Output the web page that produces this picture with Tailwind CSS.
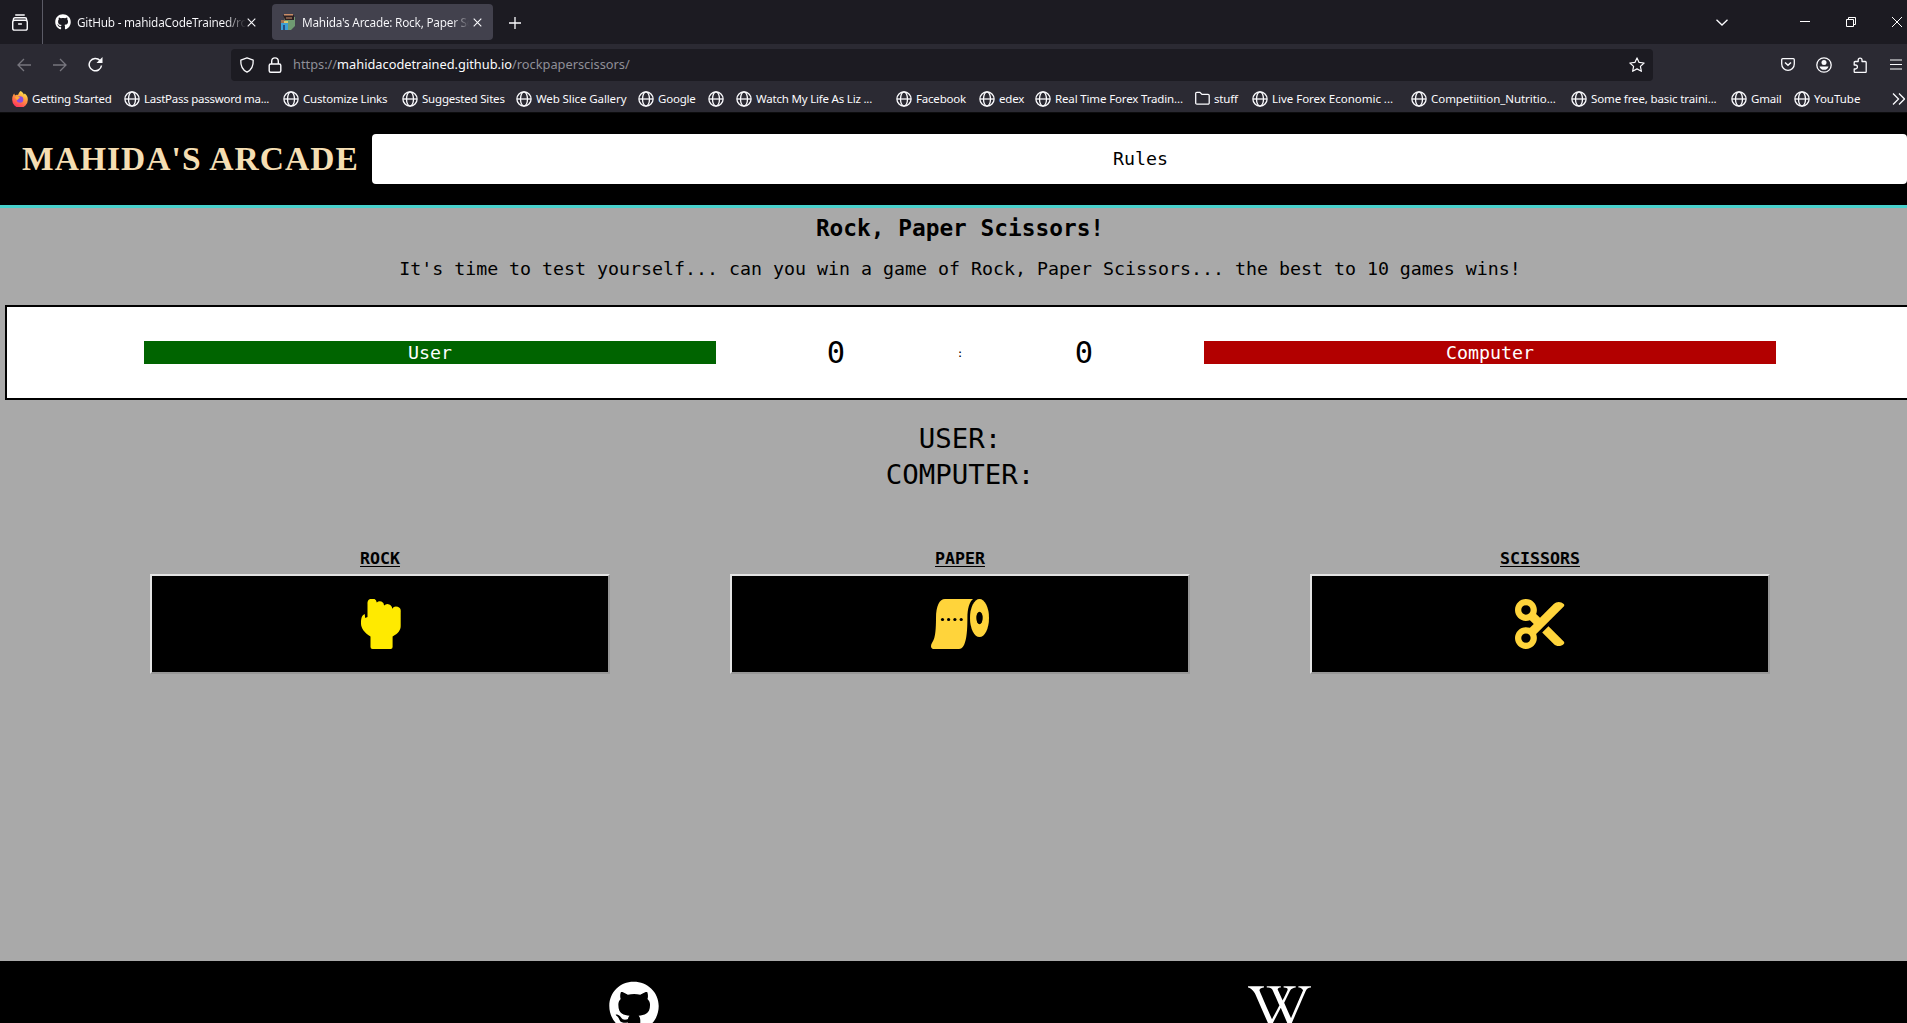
<!DOCTYPE html>
<html lang="en">
<head>
<meta charset="utf-8">
<title>Mahida's Arcade: Rock, Paper Scissors</title>
<script src="https://cdn.jsdelivr.net/npm/@tailwindcss/browser@4"></script>
</head>
<body class="w-[1907px] h-[1023px] overflow-hidden bg-[#a9a9a9] font-['Noto_Sans',sans-serif] text-black">
<svg class="hidden">
  <symbol id="globe" viewBox="0 0 16 16"><g fill="none" stroke="#fbfbfe" stroke-width="1.3"><circle cx="8" cy="8" r="7.1"/><ellipse cx="8" cy="8" rx="3.5" ry="7.1"/><path d="M1 8h14"/></g></symbol>
  <symbol id="octocat" viewBox="0 0 496 512"><path d="M244.8 8C106.1 8 0 113.3 0 252c0 110.9 69.8 205.8 169.5 239.2 12.8 2.3 17.3-5.6 17.3-12.1 0-6.2-.3-40.4-.3-61.4 0 0-70 15-84.7-29.8 0 0-11.4-29.1-27.8-36.6 0 0-22.9-15.7 1.6-15.4 0 0 24.9 2 38.6 25.8 21.9 38.6 58.6 27.5 72.9 20.9 2.3-16 8.8-27.1 16-33.7-55.9-6.2-112.3-14.3-112.3-110.5 0-27.5 7.6-41.3 23.6-58.9-2.6-6.5-11.1-33.3 2.6-67.9 20.9-6.5 69 27 69 27 20-5.6 41.5-8.5 62.8-8.5s42.8 2.9 62.8 8.5c0 0 48.1-33.6 69-27 13.7 34.7 5.2 61.4 2.6 67.9 16 17.7 25.8 31.5 25.8 58.9 0 96.5-58.9 104.2-114.8 110.5 9.2 7.9 17 22.9 17 46.4 0 33.7-.3 75.4-.3 83.6 0 6.5 4.6 14.4 17.3 12.1C428.2 457.8 496 362.9 496 252 496 113.3 383.5 8 244.8 8z"/></symbol>
</svg>

<!-- Tab strip -->
<div class="h-11 bg-[#1c1b22] flex items-center text-[11.8px] text-[#fbfbfe] tracking-[-0.23px]">
  <div class="w-[43px] h-11 border-r border-[#5b5b66] flex items-center pl-[11px] shrink-0">
    <svg class="w-[18px] h-[17px]" viewBox="0 0 18 18" fill="none" stroke="#fbfbfe" stroke-width="1.5" stroke-linecap="round"><path d="M4.500 1h9"/><path d="M2 6.500V5.700a1.700 1.700 0 0 1 1.700-1.700h10.600A1.700 1.700 0 0 1 16 5.700v.8"/><rect x="1.300" y="6.700" width="15.400" height="10.400" rx="2"/><path d="M7.500 10.500h3"/></svg>
  </div>
  <div class="w-[229px] flex items-center pl-3 shrink-0">
    <svg class="w-4 h-4 fill-white shrink-0"><use href="#octocat"/></svg>
    <div class="mt-[2px] ml-[6px] w-[169px] overflow-hidden whitespace-nowrap bg-linear-to-r from-[#fbfbfe] from-88% to-transparent bg-clip-text text-transparent">GitHub - mahidaCodeTrained/rock</div>
    <svg class="ml-[1px] w-[9px] h-[9px] shrink-0" viewBox="0 0 9 9" stroke="#fbfbfe" stroke-width="1.1"><path d="M.7.7l7.6 7.6M8.3.7L.7 8.3"/></svg>
  </div>
  <div class="w-[221px] h-9 rounded bg-[#42414d] flex items-center pl-[8px] shrink-0">
    <svg class="w-4 h-4 shrink-0" viewBox="0 0 16 16"><path fill="#6f9a72" d="M4 3h11v9l-4 4H6z"/><path fill="#2b2022" d="M3 1h11v5H5z"/><path fill="#c98d68" d="M4 0h9v1.5H4zM6 3.5h6v1H6z"/><path fill="#a06f50" d="M1 6h4v4H1z"/><path fill="#3b9ed4" d="M1 9h7v7H1z"/><path fill="#d9c66c" d="M4 7h4v2H4z"/><path fill="#274f86" d="M3 11h2v5H3z"/></svg>
    <div class="mt-[2px] ml-[6px] w-[167px] overflow-hidden whitespace-nowrap bg-linear-to-r from-[#fbfbfe] from-90% to-transparent bg-clip-text text-transparent">Mahida's Arcade: Rock, Paper Sci</div>
    <svg class="ml-[4px] w-[9px] h-[9px] shrink-0" viewBox="0 0 9 9" stroke="#fbfbfe" stroke-width="1.1"><path d="M.7.7l7.6 7.6M8.3.7L.7 8.3"/></svg>
  </div>
  <svg class="ml-[16px] mt-[2px] w-3 h-3" viewBox="0 0 12 12" stroke="#fbfbfe" stroke-width="1.3"><path d="M6 0v12M0 6h12"/></svg>
  <div class="ml-auto flex items-center">
    <svg class="w-3 h-[7px]" viewBox="0 0 12 7" fill="none" stroke="#fbfbfe" stroke-width="1.3"><path d="M.5.7L6 6l5.500-5.300"/></svg>
    <svg class="ml-[72px] w-[10px] h-[10px]" viewBox="0 0 10 10" stroke="#fff"><path d="M0 4.500h10"/></svg>
    <svg class="ml-[36px] w-[10px] h-[10px]" viewBox="0 0 10 10" fill="none" stroke="#fff"><path d="M.5 2.500h7v7h-7zM2.500 2.500v-2h7v7h-2"/></svg>
    <svg class="ml-[36px] mr-[5px] w-[10px] h-[10px]" viewBox="0 0 10 10" stroke="#fff"><path d="M0 0l10 10M10 0L0 10"/></svg>
  </div>
</div>

<!-- Navigation bar -->
<div class="h-10 pt-px bg-[#2b2a33] flex items-center text-[12.8px]">
  <svg class="ml-[17px] w-[14px] h-[14px]" viewBox="0 0 14 14" fill="none" stroke="#77767e" stroke-width="1.3"><path d="M14 7H1M7 1L1 7l6 6"/></svg>
  <svg class="ml-[22px] w-[14px] h-[14px]" viewBox="0 0 14 14" fill="none" stroke="#77767e" stroke-width="1.3"><path d="M0 7h13M7 1l6 6-6 6"/></svg>
  <svg class="ml-[21px] w-[15px] h-[15px]" viewBox="0 0 15 15" fill="none" stroke="#fbfbfe" stroke-width="1.5"><path d="M13.500 8.500A6.200 6.200 0 1 1 12 3.500"/><path fill="#fbfbfe" stroke="none" d="M14.500 0v6H8.500z"/></svg>
  <div class="ml-[128px] w-[1422px] h-8 rounded bg-[#1c1b22] flex items-center shrink-0">
    <svg class="ml-[8px] w-4 h-4" viewBox="0 0 16 16" fill="none" stroke="#fbfbfe" stroke-width="1.3"><path d="M8 .8l6.200 2.400c.3 5.500-1 9.300-6.200 12-5.200-2.700-6.500-6.500-6.200-12z" stroke-linejoin="round"/></svg>
    <svg class="ml-[12px] w-4 h-4" viewBox="0 0 16 16" fill="none" stroke="#fbfbfe" stroke-width="1.4"><rect x="2.200" y="7" width="11.600" height="8.200" rx="1.500"/><path d="M4.700 7V4.200a3.300 3.300 0 0 1 6.600 0V7"/></svg>
    <div class="mt-px ml-[10px] whitespace-nowrap text-[#8f8f97]">https://<span class="text-[#fbfbfe]">mahidacodetrained.github.io</span>/rockpaperscissors/</div>
    <svg class="ml-auto mr-[8px] w-4 h-4" viewBox="0 0 16 16" fill="none" stroke="#fbfbfe" stroke-width="1.2" stroke-linejoin="round"><path d="M8 .9l2.100 4.500 5 .6-3.700 3.400 1 4.900L8 11.900l-4.400 2.400 1-4.900L.9 6l5-.6z"/></svg>
  </div>
  <svg class="ml-[128px] w-[14px] h-[13px] shrink-0" viewBox="0 0 14 13" fill="none" stroke="#fbfbfe" stroke-width="1.3"><path d="M1.700.7h10.600a1 1 0 0 1 1 1V6A6.300 6.300 0 0 1 .7 6V1.700a1 1 0 0 1 1-1z"/><path d="M4 4.500l3 2.800 3-2.800" stroke-width="1.500"/></svg>
  <svg class="ml-[21px] w-4 h-4 shrink-0" viewBox="0 0 16 16"><circle cx="8" cy="8" r="7.200" fill="none" stroke="#fbfbfe" stroke-width="1.300"/><circle cx="8" cy="5.600" r="2.500" fill="#fbfbfe"/><path fill="#fbfbfe" d="M3.500 9.500h9a4.700 4.700 0 0 1-9 0z"/></svg>
  <svg class="ml-[20px] w-4 h-4 shrink-0" viewBox="0 0 16 16" fill="none" stroke="#fbfbfe" stroke-width="1.300" stroke-linejoin="round"><path d="M2.200 8V5.500a1 1 0 0 1 1-1h3V3a1.900 1.900 0 0 1 3.800 0v1.500h3.200a1 1 0 0 1 1 1v9a1 1 0 0 1-1 1h-10a1 1 0 0 1-1-1V12h1.200a2 2 0 0 0 0-4z"/></svg>
  <svg class="ml-[22px] w-[12px] h-[11px] shrink-0" viewBox="0 0 12 11" stroke="#fbfbfe" stroke-width="1.200"><path d="M0 1h12M0 5.500h12M0 10h12"/></svg>
</div>

<!-- Bookmarks -->
<div class="h-[29px] bg-[#2b2a33] border-b border-[#0c0c0d] pl-3 pt-px flex items-center text-[11.5px] text-[#fbfbfe] whitespace-nowrap tracking-[-0.2px] *:flex *:items-center *:shrink-0 *:gap-1">
  <div class="w-[112px]"><svg class="w-4 h-4 shrink-0" viewBox="0 0 16 16"><defs><linearGradient id="fx" x1=".8" y1="0" x2=".3" y2="1"><stop offset="0" stop-color="#fff44f"/><stop offset=".45" stop-color="#ff9640"/><stop offset="1" stop-color="#ff2a5f"/></linearGradient></defs><path fill="url(#fx)" d="M8.500 0c2 1 3 2.300 3.300 3.500l1-1C14.800 4 16 6 15.800 9A7.800 7.800 0 0 1 .2 9C0 6.500 1 4 2.200 2.600L3 4.500C4 3.500 5 3.500 6 4 6.500 2.500 7.500 1 8.500 0z"/><circle cx="8" cy="8.500" r="3.300" fill="#8a4be0"/><path fill="#ffac38" d="M3 6c2-1 4-.5 5 .7L6 8.200c0 1-1.500 1-2 0z"/></svg><span>Getting Started</span></div>
  <div class="w-[159px]"><svg class="w-4 h-4 shrink-0"><use href="#globe"/></svg><span class="tracking-[-0.26px]">LastPass password ma...</span></div>
  <div class="w-[119px]"><svg class="w-4 h-4 shrink-0"><use href="#globe"/></svg><span>Customize Links</span></div>
  <div class="w-[114px]"><svg class="w-4 h-4 shrink-0"><use href="#globe"/></svg><span>Suggested Sites</span></div>
  <div class="w-[122px]"><svg class="w-4 h-4 shrink-0"><use href="#globe"/></svg><span class="tracking-[-0.1px]">Web Slice Gallery</span></div>
  <div class="w-[70px]"><svg class="w-4 h-4 shrink-0"><use href="#globe"/></svg><span>Google</span></div>
  <div class="w-[28px]"><svg class="w-4 h-4 shrink-0"><use href="#globe"/></svg></div>
  <div class="w-[160px]"><svg class="w-4 h-4 shrink-0"><use href="#globe"/></svg><span class="tracking-0">Watch My Life As Liz ...</span></div>
  <div class="w-[83px]"><svg class="w-4 h-4 shrink-0"><use href="#globe"/></svg><span>Facebook</span></div>
  <div class="w-[56px]"><svg class="w-4 h-4 shrink-0"><use href="#globe"/></svg><span>edex</span></div>
  <div class="w-[160px]"><svg class="w-4 h-4 shrink-0"><use href="#globe"/></svg><span class="tracking-[-0.15px]">Real Time Forex Tradin...</span></div>
  <div class="w-[57px]"><svg class="w-[15px] h-[15px] shrink-0" viewBox="0 0 15 15" fill="none" stroke="#fbfbfe" stroke-width="1.300"><path d="M.7 12V2.500a1.200 1.200 0 0 1 1.200-1.200h3L7 3.400h6a1.200 1.200 0 0 1 1.200 1.200V12A1.200 1.200 0 0 1 13 13.200H2A1.200 1.200 0 0 1 .7 12z"/></svg><span>stuff</span></div>
  <div class="w-[159px]"><svg class="w-4 h-4 shrink-0"><use href="#globe"/></svg><span class="tracking-[-0.02px]">Live Forex Economic ...</span></div>
  <div class="w-[160px]"><svg class="w-4 h-4 shrink-0"><use href="#globe"/></svg><span class="tracking-[-0.05px]">Competiition_Nutritio...</span></div>
  <div class="w-[160px]"><svg class="w-4 h-4 shrink-0"><use href="#globe"/></svg><span class="tracking-[-0.13px]">Some free, basic traini...</span></div>
  <div class="w-[63px]"><svg class="w-4 h-4 shrink-0"><use href="#globe"/></svg><span>Gmail</span></div>
  <div class="w-[98px]"><svg class="w-4 h-4 shrink-0"><use href="#globe"/></svg><span class="tracking-[-0.02px]">YouTube</span></div>
  <div><svg class="w-[13px] h-3" viewBox="0 0 13 12" fill="none" stroke="#fbfbfe" stroke-width="1.300"><path d="M1 .5L6.500 6 1 11.500M7 .5L12.500 6 7 11.500"/></svg></div>
</div>

<!-- Page: laid out 13px wider than the visible window -->
<div class="w-[1920px] h-[910px] flex flex-col font-['DejaVu_Sans_Mono',monospace]">
  <header class="h-[95px] bg-black border-b-[3px] border-[#48d1cc] flex items-center shrink-0">
    <h1 class="ml-[22px] w-[350px] shrink-0 whitespace-nowrap font-['Liberation_Serif',serif] font-bold text-[33.500px] tracking-[1.050px] leading-none text-[#f5deb3]">MAHIDA'S ARCADE</h1>
    <button class="w-[1535px] h-[50px] rounded bg-white text-[18.270px] leading-none pl-[2px]">Rules</button>
  </header>
  <main class="h-[753px] shrink-0 flex flex-col text-center">
    <h2 class="mt-2 h-6 leading-6 font-bold text-[22.800px]">Rock, Paper Scissors!</h2>
    <p class="mt-[17px] h-6 leading-6 text-[18.270px] whitespace-nowrap">It's time to test yourself... can you win a game of Rock, Paper Scissors... the best to 10 games wins!</p>
    <section class="mt-[24px] ml-[5px] h-[95px] w-[1910px] border-2 border-black bg-white flex items-center shrink-0 leading-none">
      <div class="ml-[137px] w-[572px] h-[23px] leading-[23px] bg-[#006400] text-white text-[18.270px]">User</div>
      <div class="w-[240px] pt-[2px] text-[30.500px]">0</div>
      <div class="w-2 pt-px text-[11px]">:</div>
      <div class="w-[240px] pt-[2px] text-[30.500px]">0</div>
      <div class="w-[572px] h-[23px] leading-[23px] bg-[#b20000] text-white text-[18.270px]">Computer</div>
    </section>
    <div class="mt-[21px] text-[27.400px] leading-[36px]"><div>USER:</div><div>COMPUTER:</div></div>
    <section class="mt-[55px] px-[150px] flex justify-between text-[16.600px] font-bold">
      <div class="w-[460px]"><div class="h-[26px] leading-[22px] underline underline-offset-2 decoration-1">ROCK</div>
        <button class="w-[460px] h-[100px] bg-black border-2 border-t-[#e3e3e3] border-l-[#e3e3e3] border-r-[#979797] border-b-[#979797] flex items-center justify-center">
          <svg class="ml-[2px] w-10 h-[50px]" viewBox="0 0 40 50" fill="#ffea00"><path d="M6.500 18V4.800a4.700 4.700 0 0 1 9.300-1.300 4.300 4.300 0 0 1 7.300 3 4.700 4.700 0 0 1 8.100 3.300 4.600 4.600 0 0 1 8.500 3V27c0 4-2.500 7.500-8.100 10.500V48a2 2 0 0 1-2 2H11.500a2 2 0 0 1-2-2V37.500C3 33.500 0 29 0 24.500c0-4 .3-8 3.700-9.500l.5 4z"/></svg>
        </button></div>
      <div class="w-[460px]"><div class="h-[26px] leading-[22px] underline underline-offset-2 decoration-1">PAPER</div>
        <button class="w-[460px] h-[100px] bg-black border-2 border-t-[#e3e3e3] border-l-[#e3e3e3] border-r-[#979797] border-b-[#979797] flex items-center justify-center">
          <svg class="mr-px w-[58px] h-[50px]" viewBox="0 0 58 50" fill="#ffd43b"><path d="M14 0h28c-3.500 3-5.600 9-5.600 19 0 13-.8 31-8.400 31H2.500C.5 50-.3 48 .1 46.500 1.500 41 5 43 5 19 5 7 8.500 0 14 0z"/><ellipse cx="48.500" cy="19" rx="9.500" ry="19"/><ellipse cx="48.500" cy="19" rx="3.200" ry="6.200" fill="#000"/><g fill="#000"><circle cx="11.500" cy="20.500" r="1.600"/><circle cx="17.600" cy="20.500" r="1.600"/><circle cx="23.900" cy="20.500" r="1.600"/><circle cx="30.200" cy="20.500" r="1.600"/></g></svg>
        </button></div>
      <div class="w-[460px]"><div class="h-[26px] leading-[22px] underline underline-offset-2 decoration-1">SCISSORS</div>
        <button class="w-[460px] h-[100px] bg-black border-2 border-t-[#e3e3e3] border-l-[#e3e3e3] border-r-[#979797] border-b-[#979797] flex items-center justify-center">
          <svg class="w-[50px] h-[50px]" viewBox="0 0 512 512" fill="#ffd43b"><path fill-rule="evenodd" d="M256 192l-39.500-39.500c4.900-12.600 7.500-26.200 7.500-40.500C224 50.100 173.900 0 112 0S0 50.100 0 112s50.100 112 112 112c14.300 0 27.900-2.700 40.500-7.500L192 256l-39.500 39.500c-12.600-4.900-26.200-7.500-40.500-7.500C50.100 288 0 338.100 0 400s50.100 112 112 112s112-50.100 112-112c0-14.300-2.700-27.900-7.500-40.500L499.200 76.800c7.100-7.100 7.100-18.500 0-25.600c-28.300-28.300-74.100-28.300-102.400 0L256 192zm22.600 150.600L396.800 460.800c28.300 28.300 74.100 28.300 102.400 0c7.100-7.100 7.100-18.500 0-25.600L342.600 278.600l-64 64zM64 112a48 48 0 1 1 96 0 48 48 0 1 1-96 0zm48 240a48 48 0 1 1 0 96 48 48 0 1 1 0-96z"/></svg>
        </button></div>
    </section>
  </main>
  <footer class="h-[62px] bg-black flex shrink-0 overflow-hidden">
    <svg class="mt-[20px] ml-[609px] w-[50px] h-[51px] fill-white shrink-0"><use href="#octocat"/></svg>
    <svg class="mt-[20px] ml-[589px] w-[63px] h-[51px] fill-white shrink-0" viewBox="0 0 640 512"><path d="M640 51.200l-.3 12.200c-28.100.8-45 15.800-55.800 40.300-25 57.800-103.300 240-155.300 358.600H415l-81.900-193.100c-32.500 63.600-68.300 130-99.200 193.100-.3.3-15 0-15-.3C172 352.300 122.800 243.400 75.800 133.400 64.400 106.700 26.400 63.400.2 63.700c0-3.100-.3-10-.3-14.200h161.900v13.900c-19.200 1.100-52.800 13.300-43.300 34.200 21.900 49.700 103.600 240.300 125.600 288.600 15-29.700 57.800-109.200 75.300-142.800-13.900-28.300-58.600-133.900-72.800-160-9.700-17.800-36.100-19.400-55.800-19.700V49.800l142.500.3v13.100c-19.400.6-38.100 7.800-29.400 26.100 18.900 40 30.600 68.100 48.100 104.700 5.600-10.800 34.700-69.400 48.100-100.800 8.900-20.600-3.900-28.600-38.600-29.400.3-3.600 0-10.300.3-13.600 44.400-.3 111.100-.3 123.100-.6v13.600c-22.500.8-45.800 12.800-58.100 31.700l-59.200 122.800c6.400 16.100 63.300 142.800 69.200 156.700L559.200 91.800c-8.600-23.100-36.400-28.100-47.200-28.300V49.600l127.800 1.100.2.500z"/></svg>
  </footer>
</div>
</body>
</html>
